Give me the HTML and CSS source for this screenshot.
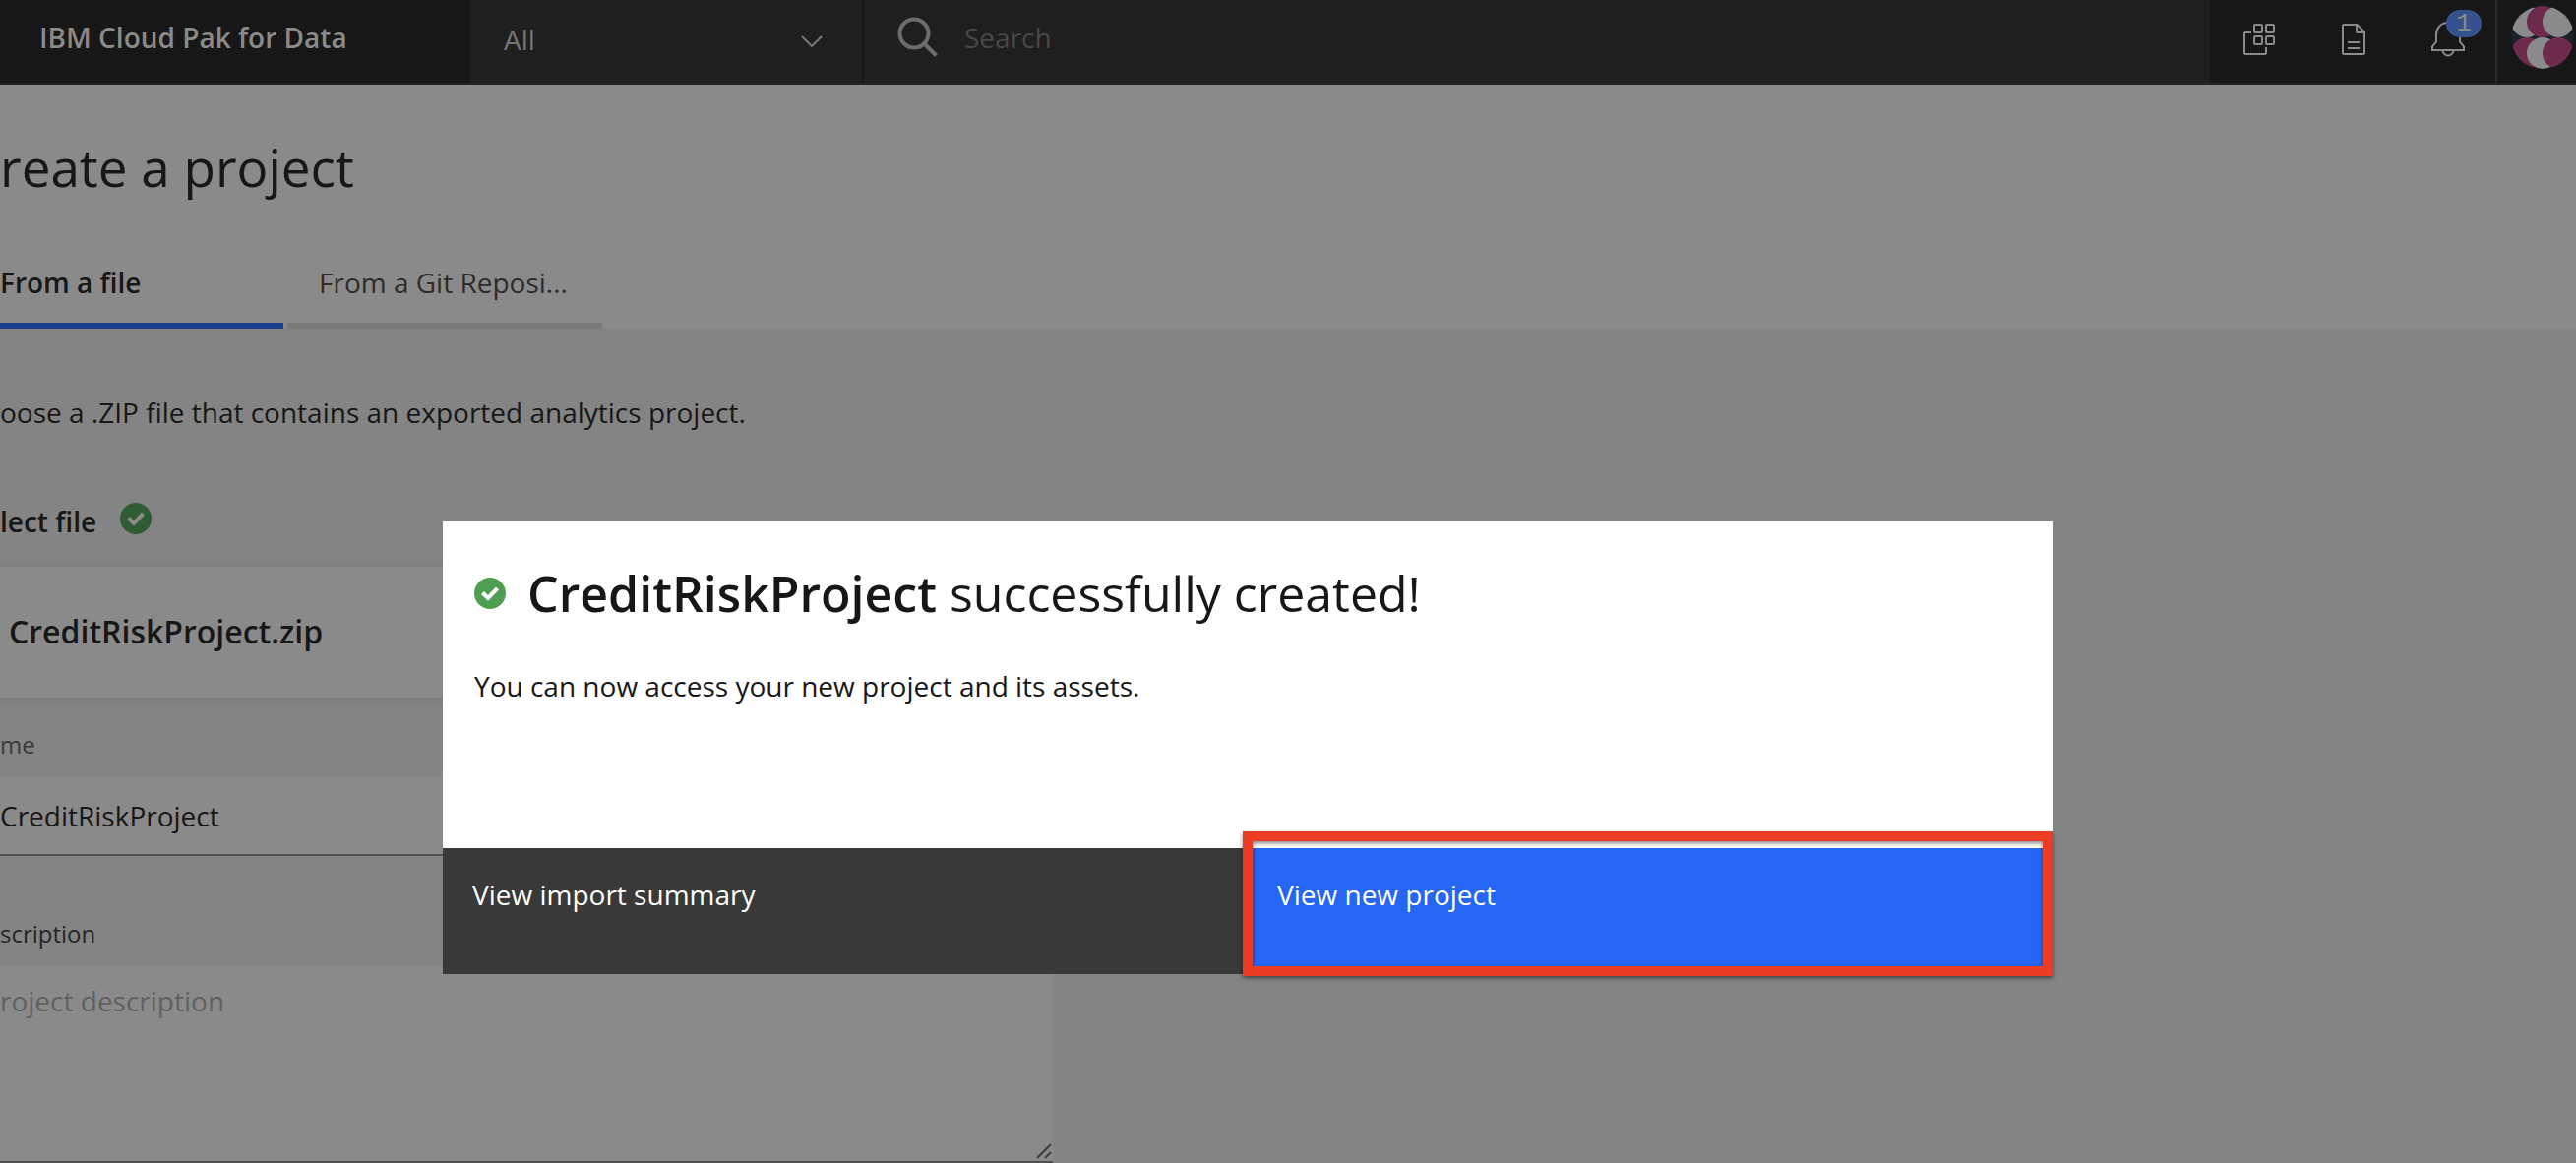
FILE: index.html
```html
<!DOCTYPE html>
<html lang="en">
<head>
<meta charset="utf-8">
<title>Create a project</title>
<link rel="stylesheet" href="styles.css">
</head>
<body>
<header class="header">
  <a class="brand" href="#">IBM Cloud Pak for Data</a>
  <div class="scope">
    <select class="scope-select" aria-label="Search scope"><option>All</option></select>
    <svg class="scope-chevron" viewBox="0 0 22 12" width="22" height="12" fill="none" stroke="currentColor" stroke-width="2"><path d="M1 1l10 10L21 1"/></svg>
  </div>
  <div class="search">
    <svg class="search-icon" viewBox="0 0 42 42" width="42" height="42" fill="none" stroke="currentColor" stroke-width="4"><circle cx="17" cy="17" r="14.5"/><path d="M27.500 27.500L39.500 39.500"/></svg>
    <input class="search-input" type="search" placeholder="Search" aria-label="Search">
  </div>
  <div class="tools">
    <button class="tool" type="button" aria-label="Apps">
      <svg viewBox="0 0 32 32" width="32" height="32" fill="none" stroke="currentColor" stroke-width="2"><rect x="11" y="1" width="8" height="8" rx="1"/><rect x="23" y="1" width="8" height="8" rx="1"/><rect x="11" y="13" width="8" height="8" rx="1"/><rect x="23" y="13" width="8" height="8" rx="1"/><path d="M8 9H2a1 1 0 0 0-1 1v20a1 1 0 0 0 1 1h20a1 1 0 0 0 1-1v-6"/></svg>
    </button>
    <button class="tool" type="button" aria-label="Documentation">
      <svg viewBox="0 0 32 32" width="32" height="32" fill="none" stroke="currentColor" stroke-width="2"><path d="M19.500 1H6a1 1 0 0 0-1 1v28a1 1 0 0 0 1 1h20a1 1 0 0 0 1-1V8.500z"/><path d="M19 1v7a1 1 0 0 0 1 1h7M10 19h12M10 25h12"/></svg>
    </button>
    <button class="tool" type="button" aria-label="Notifications">
      <svg viewBox="0 0 36 36" width="36" height="36" fill="none" stroke="currentColor" stroke-width="2"><path d="M18 1C10.500 1 6 6.500 6 13v7.500l-4 5V29h32v-3.500l-4-5V13C30 6.500 25.500 1 18 1z"/><path d="M12.500 29a5.500 5.500 0 0 0 11 0"/></svg>
      <span class="badge">1</span>
    </button>
  </div>
  <button class="account" type="button" aria-label="Account">
    <svg viewBox="0 0 64 64" width="64" height="64"><clipPath id="disc"><circle cx="32" cy="32" r="32"/></clipPath><g clip-path="url(#disc)"><path fill="#18242a" d="M0 0h64v64H0z"/><circle fill="#8a8a8a" cx="16" cy="16" r="16"/><circle fill="#6e2a4b" cx="32" cy="16" r="16"/><circle fill="#8a8a8a" cx="48" cy="16" r="16"/><circle fill="#6e2a4b" cx="16" cy="48" r="16"/><circle fill="#8a8a8a" cx="32" cy="48" r="16"/><circle fill="#6e2a4b" cx="48" cy="48" r="16"/></g></svg>
  </button>
</header>

<main>
  <div class="page-head">
    <h1 class="title">reate a project</h1>
    <div class="tabs" role="tablist">
      <button class="tab tab-active" type="button" role="tab" aria-selected="true">From a file</button>
      <button class="tab" type="button" role="tab" aria-selected="false">From a Git Reposi...</button>
    </div>
  </div>
  <form class="form">
    <p class="intro">oose a .ZIP file that contains an exported analytics project.</p>
    <div class="select-row">
      <h2 class="select-title">lect file</h2>
      <svg class="select-check" viewBox="0 0 32 32" width="32" height="32"><circle cx="16" cy="16" r="16" fill="#2f5c34"/><path d="M8.500 15.500l5.500 5.500 9.500-10" fill="none" stroke="#8a8a8a" stroke-width="4"/></svg>
    </div>
    <div class="file-card">CreditRiskProject.zip</div>
    <label class="label label-name" for="name">me</label>
    <input class="name-input" id="name" type="text" value="CreditRiskProject">
    <label class="label label-description" for="description">scription</label>
    <div class="description">
      <textarea class="description-input" id="description" placeholder="roject description"></textarea>
      <svg class="grip" viewBox="0 0 16 16" width="16" height="16" fill="none" stroke="#3c3c3c" stroke-width="2"><path d="M1 15L15 1M9 15l6-6"/></svg>
    </div>
  </form>
</main>

<div class="overlay">
  <section class="modal" role="dialog" aria-labelledby="modal-title">
    <div class="modal-body">
      <div class="modal-heading">
        <svg viewBox="0 0 32 32" width="32" height="32"><circle cx="16" cy="16" r="16" fill="#4f9f53"/><path d="M8.500 15.500l5.500 5.500 9.500-10" fill="none" stroke="#fff" stroke-width="4"/></svg>
        <h2 class="modal-title" id="modal-title"><strong>CreditRiskProject</strong> successfully created!</h2>
      </div>
      <p class="modal-text">You can now access your new project and its assets.</p>
    </div>
    <div class="modal-actions">
      <button class="action" type="button">View import summary</button>
      <div class="highlighted">
        <button class="action action-primary" type="button">View new project</button>
        <span class="highlight"></span>
      </div>
    </div>
  </section>
</div>
</body>
</html>
```
FILE: styles.css
```css
* { box-sizing: border-box; }

body {
  margin: 0;
  min-height: 100vh;
  position: relative;
  background: #848484;
  color: #171717;
  font: 28px/40px "Open Sans", "Noto Sans", sans-serif;
}

h1, h2, p { margin: 0; }

button, input, select, textarea {
  margin: 0;
  padding: 0;
  border: 0;
  border-radius: 0;
  outline: 0;
  background: none;
  color: inherit;
  font: inherit;
}

svg { display: block; flex: none; }

/* Header */
.header {
  display: flex;
  height: 86px;
  border-bottom: 2px solid #242424;
  background: #1f1f1f;
  color: #8a8a8a;
}

.brand {
  width: 478px;
  padding: 18px 40px 0;
  background: #171717;
  color: inherit;
  font-weight: 600;
  text-decoration: none;
}

.scope {
  display: flex;
  align-items: center;
  width: 400px;
  padding: 0 40px 0 34px;
  border-right: 2px solid #171717;
  color: #757575;
}

.scope-select {
  flex: 1;
  height: 80px;
  margin-bottom: 4px;
  appearance: none;
}

.search {
  display: flex;
  flex: 1;
  align-items: center;
  gap: 26px;
  padding: 0 34px;
  color: #6c6c6c;
}

.search-icon { margin-bottom: 8px; }

.search-input {
  flex: 1;
  height: 76px;
  margin-bottom: 8px;
}

.search-input::placeholder { color: #474747; }

.tools {
  display: flex;
  padding-left: 2px;
  border-right: 2px solid #2a2a2a;
  border-bottom-left-radius: 4px;
  background: #171717;
}

.tool {
  display: flex;
  position: relative;
  align-items: center;
  justify-content: center;
  width: 96px;
  padding-bottom: 4px;
}

.badge {
  position: absolute;
  top: 10px;
  right: 14px;
  width: 36px;
  height: 28px;
  border-radius: 14px;
  background: #35528f;
  font: 26px/28px "Liberation Mono", monospace;
  text-align: center;
}

.account {
  padding: 0 2px 8px 14px;
  background: #171717;
}

/* Page */
.page-head {
  padding-top: 48px;
  background: #8a8a8a;
}

.title {
  font-size: 53px;
  font-weight: 400;
  line-height: 72px;
}

.tabs {
  display: flex;
  gap: 4px;
  margin-top: 32px;
}

.tab {
  width: 320px;
  padding: 28px 32px 20px;
  border-bottom: 6px solid #7a7a7a;
  color: #2c2c2c;
  line-height: 42px;
  text-align: left;
  white-space: nowrap;
}

.tab-active {
  width: 288px;
  padding-left: 0;
  border-color: #1c3f8c;
  color: #171717;
  font-weight: 600;
}

.form {
  width: 1070px;
  padding-top: 65px;
}

.select-row {
  display: flex;
  align-items: center;
  gap: 24px;
  margin-top: 71px;
}

.select-title {
  font-size: 28px;
  font-weight: 600;
}

.select-check { margin-bottom: 6px; }

.file-card {
  margin-top: 26px;
  padding: 44px 9px 45px;
  background: #8a8a8a;
  box-shadow: 0 2px 6px #777;
  font-size: 32px;
  font-weight: 600;
  line-height: 44px;
}

.label {
  display: block;
  font-size: 24px;
  line-height: 32px;
}

.label-name {
  margin-top: 32px;
  color: #3a3a3a;
}

.label-description {
  margin-top: 63px;
  color: #262626;
}

.name-input,
.description-input {
  display: block;
  width: 100%;
  border-bottom: 2px solid #505050;
  background: #8a8a8a;
}

.name-input {
  height: 80px;
  margin-top: 17px;
}

.description {
  position: relative;
  margin-top: 17px;
}

.description-input {
  height: 200px;
  padding: 15px 0;
  resize: none;
}

.description-input::placeholder { color: #616161; }

.grip {
  position: absolute;
  right: 1px;
  bottom: 4px;
}

/* Modal */
.overlay {
  position: absolute;
  inset: 0;
  display: flex;
  align-items: flex-start;
  justify-content: center;
  padding: 530px 82px 0 0;
}

.modal {
  width: 100%;
  max-width: 1636px;
  background: #fff;
}

.modal-body {
  min-height: 332px;
  padding: 41px 32px;
}

.modal-heading {
  display: flex;
  align-items: center;
  gap: 22px;
}

.modal-title {
  font-size: 50px;
  font-weight: 400;
  line-height: 64px;
}

.modal-title strong { font-weight: 600; }

.modal-text { margin-top: 42px; }

.modal-actions {
  display: grid;
  grid-template-columns: 1fr 1fr;
}

.action {
  display: flex;
  width: 100%;
  height: 128px;
  padding: 27px 30px;
  background: #393939;
  color: #fff;
}

.action-primary { background: #2566f5; }

.highlighted { position: relative; }

.highlight {
  position: absolute;
  inset: -17px 0 -2px -5px;
  border: 10px solid #eb3c26;
  box-shadow: 0 2px 4px rgba(0, 0, 0, .5), inset 0 2px 4px rgba(0, 0, 0, .5);
  pointer-events: none;
}
```
